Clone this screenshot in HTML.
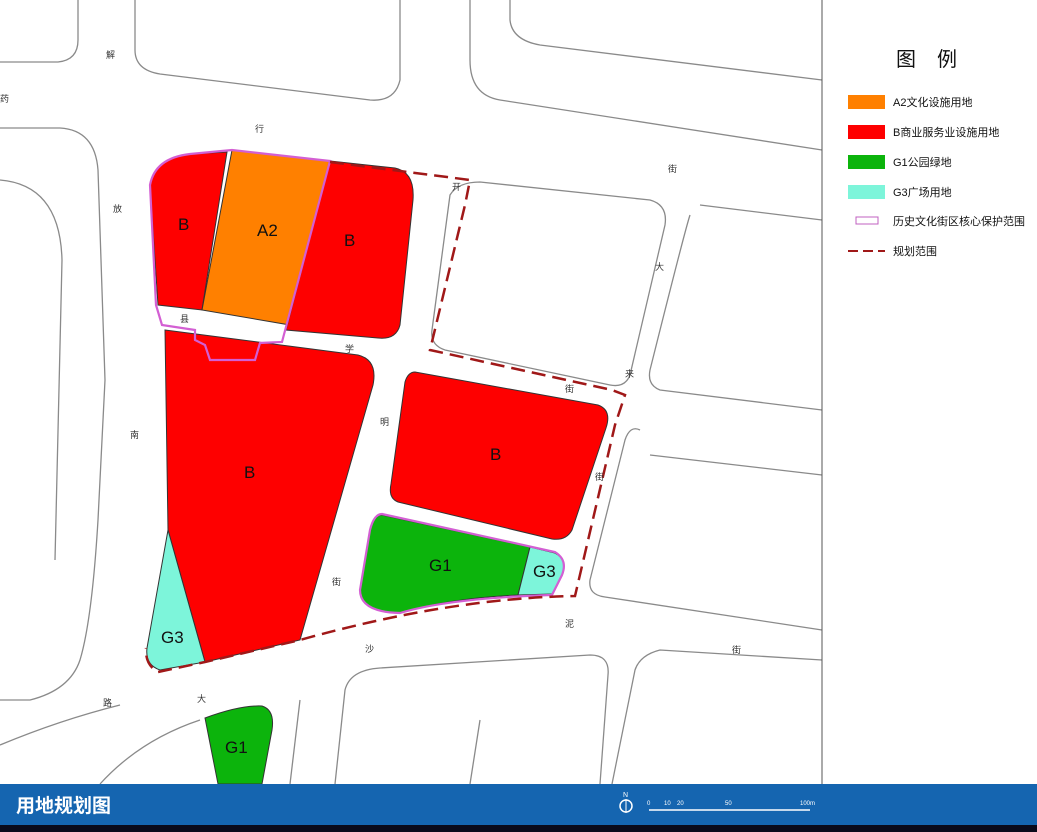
<!DOCTYPE html>
<html><head><meta charset="utf-8"><style>
body{margin:0;width:1037px;height:832px;overflow:hidden;background:#fff;font-family:"Liberation Sans","Noto Sans CJK SC",sans-serif}
svg{position:absolute;left:0;top:0}
</style></head><body>
<svg width="1037" height="832" viewBox="0 0 1037 832">
<g fill="none" stroke="#8a8a8a" stroke-width="1.3">
<path d="M78,0 V40 Q78,60 58,62 H0"/>
<path d="M0,128 H60 Q95,130 98,170 L105,380 L98,520 Q92,620 80,660 Q70,690 30,700 H0"/>
<path d="M0,180 Q60,185 62,260 L55,560"/>
<path d="M135,0 V50 Q135,70 160,74 L370,100 Q395,102 400,80 V0"/>
<path d="M470,0 V60 Q470,95 500,100 L822,150"/>
<path d="M510,0 V20 Q512,40 540,45 L822,80"/>
<path d="M450,195 Q458,182 480,182 L650,200 Q668,205 665,225 L630,375 Q625,388 610,385 L445,350 Q430,345 432,330 Z"/>
<path d="M700,205 L822,220 M690,215 Q685,230 650,370 Q647,385 660,390 L822,410"/>
<path d="M640,430 Q630,425 625,440 L590,580 Q588,595 605,597 L822,630 M822,475 L650,455"/>
<path d="M822,660 L660,650 Q640,655 635,670 L612,784"/>
<path d="M335,784 L345,690 Q350,670 380,668 L590,655 Q610,655 608,675 L600,784"/>
<path d="M100,784 Q140,740 200,720 M0,745 Q60,720 120,705"/>
<path d="M290,784 L300,700"/>
<path d="M470,784 L480,720"/>
</g>
<path d="M150,185 Q155,158 190,154 L227,152 L202,310 L158,305 Z" fill="#fe0000" stroke="#333" stroke-width="1"/>
<path d="M232,150 L330,161 L290,325 L202,310 Z" fill="#ff8000" stroke="#333" stroke-width="1"/>
<path d="M330,161 L395,168 Q415,172 413,200 L400,325 Q396,340 378,338 L286,330 Z" fill="#fe0000" stroke="#333" stroke-width="1"/>
<path d="M165,330 L358,355 Q378,360 373,385 L300,640 L205,662 L168,530 Z" fill="#fe0000" stroke="#333" stroke-width="1"/>
<path d="M168,530 L205,662 L160,670 Q145,665 147,648 Z" fill="#7df5da" stroke="#333" stroke-width="1"/>
<path d="M415,372 L598,405 Q612,410 606,428 L572,530 Q566,541 552,539 L398,502 Q388,498 391,484 L405,382 Q408,372 415,372 Z" fill="#fe0000" stroke="#333" stroke-width="1"/>
<path d="M382,515 L530,547 L518,595 Q450,598 400,613 Q360,612 360,590 L370,530 Q374,515 382,515 Z" fill="#0cb40c" stroke="#333" stroke-width="1"/>
<path d="M530,547 L555,553 Q568,560 562,575 L552,594 L518,595 Z" fill="#7df5da" stroke="#333" stroke-width="1"/>
<path d="M205,718 Q240,705 262,706 Q275,710 272,730 L262,784 H218 Z" fill="#0cb40c" stroke="#333" stroke-width="1"/>
<g fill="none" stroke="#d35fd3" stroke-width="2.2">
<path d="M150,185 Q155,158 190,154 L232,150 L330,161 L282,342 L260,343 L255,360 L210,360 L205,345 L195,340 L195,330 L162,325 L156,305 Z"/>
<path d="M382,514 L555,552 Q568,560 562,575 L552,595 Q450,598 400,613 Q360,612 360,590 L370,530 Q374,514 382,514 Z"/>
</g>
<path d="M330,162 L470,180 L465,205 L430,350 L612,390 L625,395 L615,425 L575,596 Q450,598 300,640 L205,662 L158,672 Q145,665 146,648" fill="none" stroke="#a01818" stroke-width="2.5" stroke-dasharray="14,7"/>
<g font-size="9" fill="#333">
<text x="106" y="58">解</text><text x="0" y="102">药</text><text x="255" y="132">行</text><text x="668" y="172">街</text>
<text x="113" y="212">放</text><text x="452" y="190">开</text><text x="655" y="270">大</text><text x="625" y="377">来</text>
<text x="180" y="322">县</text><text x="345" y="352">学</text><text x="565" y="392">街</text><text x="130" y="438">南</text>
<text x="380" y="425">明</text><text x="595" y="480">街</text><text x="332" y="585">街</text><text x="565" y="627">泥</text>
<text x="365" y="652">沙</text><text x="732" y="653">街</text><text x="103" y="706">路</text><text x="197" y="702">大</text>
</g>
<g font-size="17" fill="#111">
<text x="178" y="230">B</text><text x="257" y="236">A2</text><text x="344" y="246">B</text><text x="244" y="478">B</text>
<text x="490" y="460">B</text><text x="429" y="571">G1</text><text x="533" y="577">G3</text><text x="161" y="643">G3</text><text x="225" y="753">G1</text>
</g>
<line x1="822" y1="0" x2="822" y2="784" stroke="#555" stroke-width="1"/>
<text x="896" y="66" font-size="20" fill="#111">图</text><text x="937" y="66" font-size="20" fill="#111">例</text>
<g font-size="11" fill="#111">
<rect x="848" y="95" width="37" height="14" fill="#ff8000"/><text x="893" y="106">A2文化设施用地</text>
<rect x="848" y="125" width="37" height="14" fill="#fe0000"/><text x="893" y="136">B商业服务业设施用地</text>
<rect x="848" y="155" width="37" height="14" fill="#0cb40c"/><text x="893" y="166">G1公园绿地</text>
<rect x="848" y="185" width="37" height="14" fill="#7df5da"/><text x="893" y="196">G3广场用地</text>
<rect x="856" y="217" width="22" height="7" fill="none" stroke="#c060c0"/><text x="893" y="225">历史文化街区核心保护范围</text>
<line x1="848" y1="251" x2="885" y2="251" stroke="#a01818" stroke-width="2" stroke-dasharray="10,5"/><text x="893" y="255">规划范围</text>
</g>
<rect x="0" y="784" width="1037" height="41" fill="#1565b0"/>
<rect x="0" y="825" width="1037" height="7" fill="#0a0a1a"/>
<text x="16" y="812" font-size="19" font-weight="bold" fill="#fff">用地规划图</text>
<circle cx="626" cy="806" r="6" fill="none" stroke="#fff" stroke-width="1.5"/><text x="623" y="797" font-size="7" fill="#fff">N</text>
<line x1="626" y1="799" x2="626" y2="813" stroke="#fff"/>
<g font-size="6" fill="#fff"><text x="647" y="805">0</text><text x="664" y="805">10</text><text x="677" y="805">20</text><text x="725" y="805">50</text><text x="800" y="805">100m</text></g>
<line x1="649" y1="810" x2="810" y2="810" stroke="#fff" stroke-width="1.5"/>
</svg>
</body></html>
